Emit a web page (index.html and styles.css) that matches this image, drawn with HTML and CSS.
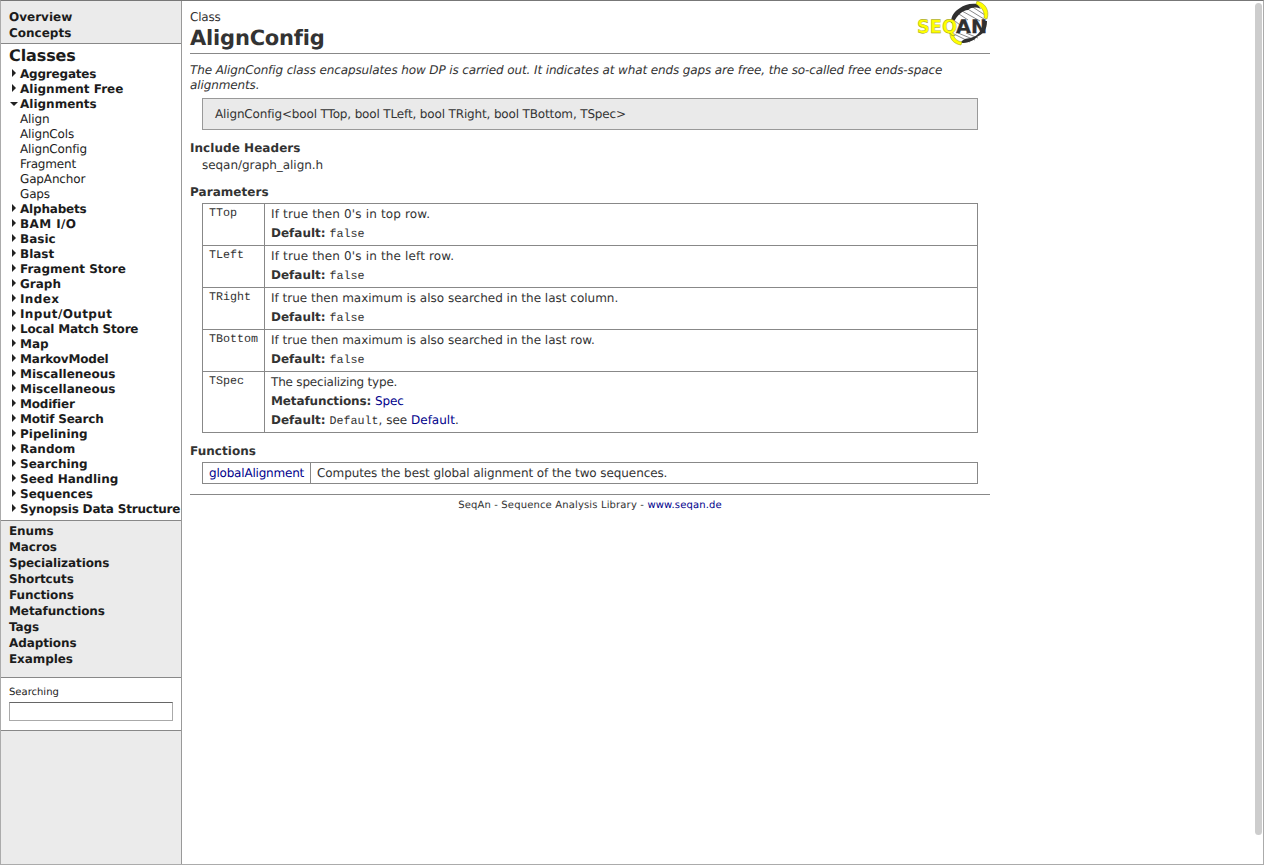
FILE: index.html
```
<!DOCTYPE html>
<html lang="en">
<head>
<meta charset="utf-8">
<title>AlignConfig</title>
<link rel="stylesheet" href="styles.css">
</head>
<body>
<div class="window">
<nav class="sidebar">
  <div class="nav-top"><a>Overview</a><a>Concepts</a></div>
  <div class="classes">
    <h2>Classes</h2>
    <ul class="tree">
      <li class="tight">Aggregates</li>
      <li>Alignment Free</li>
      <li class="open">Alignments</li>
      <li class="leaf">Align</li>
      <li class="leaf">AlignCols</li>
      <li class="leaf">AlignConfig</li>
      <li class="leaf">Fragment</li>
      <li class="leaf">GapAnchor</li>
      <li class="leaf">Gaps</li>
      <li class="tight">Alphabets</li>
      <li class="wide">BAM I/O</li>
      <li>Basic</li>
      <li>Blast</li>
      <li>Fragment Store</li>
      <li>Graph</li>
      <li class="wide">Index</li>
      <li class="wide">Input/Output</li>
      <li class="tight">Local Match Store</li>
      <li>Map</li>
      <li class="tight">MarkovModel</li>
      <li>Miscalleneous</li>
      <li>Miscellaneous</li>
      <li class="tight">Modifier</li>
      <li class="tight">Motif Search</li>
      <li>Pipelining</li>
      <li>Random</li>
      <li>Searching</li>
      <li>Seed Handling</li>
      <li>Sequences</li>
      <li class="tight">Synopsis Data Structure</li>
    </ul>
  </div>
  <div class="nav-bottom"><a>Enums</a><a>Macros</a><a>Specializations</a><a>Shortcuts</a><a>Functions</a><a>Metafunctions</a><a>Tags</a><a>Adaptions</a><a>Examples</a></div>
  <div class="search"><label for="q">Searching</label><input id="q" type="text"></div>
</nav>
<main class="content">
  <header class="page-head">
    <div>
      <div class="kind">Class</div>
      <h1>AlignConfig</h1>
    </div>
    <svg class="logo" width="72" height="48" viewBox="0 0 72 48">
      <path d="M34 22C37 11 46 4 59 3C68 8 70 16 66 25C62 35 54 41 43 41C35 38 33 30 34 22Z" fill="#fff"/>
      <path d="M44 10L62 20M48 7L66 18M53 5L67 14M41 13L50 19M36 33L52 41M40 32L57 39M48 32L60 37M37 20L42 24" stroke="#888" stroke-width="1"/>
      <path d="M33 22C33 14 37 10 42 7C46 4 52 2 59 3L63 8C58 6 54 6 50 9C45 9 39 14 36 21Z" fill="#303030"/>
      <path d="M43 41C47 36 52 38 55 36C60 35 64 29 66 20L69 20C69 29 65 33 59 36C55 40 50 42 43 42Z" fill="#303030"/>
      <path d="M59 0C67 2 72 9 69 18L66 17C67 11 64 6 58 3Z" fill="#ff0" stroke="#8f8f20" stroke-width=".5"/>
      <path d="M35 31C35 36 38 40 44 41L43 44C36 43 31 38 32 31Z" fill="#ff0" stroke="#8f8f20" stroke-width=".5"/>
      <text class="logo-seq" x="-1" y="32" textLength="40" lengthAdjust="spacingAndGlyphs">SEQ</text>
      <text class="logo-an" x="38" y="32" textLength="31" lengthAdjust="spacingAndGlyphs">AN</text>
    </svg>
  </header>
  <p class="summary">The AlignConfig class encapsulates how DP is carried out. It indicates at what ends gaps are free, the so-called free ends-space<br>alignments.</p>
  <div class="signature"><span>AlignConfig&lt;bool TTop, bool TLeft, bool TRight, bool TBottom, TSpec&gt;</span></div>
  <h3 class="h-include">Include Headers</h3>
  <div class="include">seqan/graph_align.h</div>
  <h3 class="h-params">Parameters</h3>
  <div class="table params">
    <div class="key">TTop</div><div class="val"><p class="wide">If true then 0's in top row.</p><p><b>Default:</b> <code>false</code></p></div>
    <div class="key">TLeft</div><div class="val"><p class="wide">If true then 0's in the left row.</p><p><b>Default:</b> <code>false</code></p></div>
    <div class="key">TRight</div><div class="val"><p>If true then maximum is also searched in the last column.</p><p><b>Default:</b> <code>false</code></p></div>
    <div class="key">TBottom</div><div class="val"><p>If true then maximum is also searched in the last row.</p><p><b>Default:</b> <code>false</code></p></div>
    <div class="key">TSpec</div><div class="val"><p class="tight">The specializing type.</p><p class="meta"><b>Metafunctions:</b> <a>Spec</a></p><p><b>Default:</b> <code>Default</code>, see <a>Default</a>.</p></div>
  </div>
  <h3 class="h-funcs">Functions</h3>
  <div class="table funcs">
    <div class="fn tight"><a>globalAlignment</a></div><div class="val"><p class="desc">Computes the best global alignment of the two sequences.</p></div>
  </div>
  <footer>SeqAn - Sequence Analysis Library - <a>www.seqan.de</a></footer>
</main>
<div class="scrollbar"></div>
</div>
</body>
</html>
```
FILE: styles.css
```
* { box-sizing: border-box; }
body { margin: 0; background: #fff; color: #333; font: 12px/15px Verdana, "DejaVu Sans", sans-serif; text-rendering: geometricPrecision; }
h1, h2, h3, p, ul { margin: 0; padding: 0; }
.window { display: flex; width: 1264px; height: 865px; border: 1px solid #ababab; border-top-color: #777; overflow: hidden; }
.sidebar { width: 181px; flex: none; background: #ebebeb; border-right: 1px solid #999; color: #1c1c1c; overflow: hidden; white-space: nowrap; }
.nav-top a, .nav-bottom a { display: block; font-weight: bold; line-height: 16px; letter-spacing: -0.1px; }
.nav-top { padding: 8px 8px 0; height: 42px; }
.nav-top a { letter-spacing: 0; }
.classes { background: #fff; border: solid #888; border-width: 1px 0; height: 478px; padding-left: 8px; }
.classes h2 { font-size: 16px; line-height: 20px; padding-top: 2px; letter-spacing: -0.1px; }
.tree { list-style: none; }
.tree li { height: 15px; line-height: 16px; padding-left: 11px; position: relative; font-weight: bold; }
.tree li::before { content: ""; position: absolute; left: 3px; top: 3px; border: solid transparent; border-width: 4px 0 4px 4px; border-left-color: #222; }
.tree .open::before { left: 1px; top: 6px; border: solid transparent; border-width: 4px 4px 0; border-top-color: #222; }
.tree .leaf { font-weight: normal; letter-spacing: -0.15px; }
.tree .leaf::before { display: none; }
.nav-bottom { padding: 2px 8px 0; height: 156px; }
.search { background: #fff; border: solid #888; border-width: 1px 0; height: 54px; padding: 7px 8px 0; font-size: 10px; }
.search label { display: block; height: 17px; line-height: 16px; }
.search input { display: block; width: 164px; height: 19px; border: 1px solid #aaa; border-top-color: #666; margin: 0; padding: 0; background: #fff; }
.content { width: 800px; margin-left: 8px; }
.page-head { display: flex; justify-content: space-between; height: 53px; border-bottom: 1px solid #888; padding-top: 8px; }
.kind { line-height: 16px; letter-spacing: -0.2px; }
h1 { font-size: 21px; line-height: 26px; letter-spacing: -0.2px; }
.logo { margin: -8px 0 0; overflow: visible; }
.logo-seq { font: bold 18.5px "DejaVu Sans", sans-serif; fill: #ff0; stroke: #8f8f20; stroke-width: .4; }
.logo-an { font: bold 18.5px "DejaVu Sans", sans-serif; fill: #303030; stroke: #303030; stroke-width: .3; }
.summary { font-style: italic; padding-top: 9px; white-space: nowrap; letter-spacing: -0.12px; }
.signature { margin: 5px 12px 0; height: 32px; border: 1px solid #999; background: #eaeaea; padding: 8px 12px; letter-spacing: -0.15px; }
h3 { font-size: 12px; line-height: 16px; letter-spacing: 0.05px; }
.h-include { margin-top: 10px; }
.include { padding-left: 12px; line-height: 18px; letter-spacing: -0.05px; }
.h-params { margin-top: 10px; }
.table { display: grid; margin: 3px 12px 0; border: solid #888; border-width: 0 1px 1px 0; }
.table > div { border: solid #888; border-width: 1px 0 0 1px; padding: 0 6px 3px; }
.params { grid-template-columns: 62px 1fr; }
.funcs { grid-template-columns: 108px 1fr; }
.table p { height: 19px; }
.table p, .fn { line-height: 20px; }
.funcs > div { height: 21px; }
.key, code { font-family: "Courier New", "Liberation Mono", monospace; font-size: 11.7px; }
.key { line-height: 18px; }
.wide { letter-spacing: 0.15px; }
.tree .wide { letter-spacing: 0.4px; }
.tight { letter-spacing: -0.2px; }
.meta { letter-spacing: -0.12px; }
.desc { letter-spacing: -0.09px; }
a { color: #00008b; }
.nav-top a, .nav-bottom a { color: inherit; }
.h-funcs { margin-top: 10px; }
footer { margin-top: 10px; border-top: 1px solid #888; text-align: center; font-size: 10px; line-height: 22px; letter-spacing: 0.15px; }
.scrollbar { width: 7px; height: 832px; margin: 2px 1px 0 auto; border-radius: 4px; background: #cdcdcd; }
```
